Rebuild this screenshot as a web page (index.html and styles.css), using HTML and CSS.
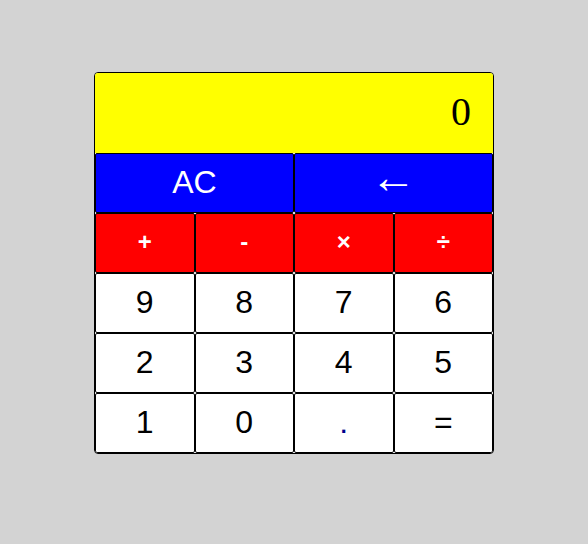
FILE: index.html
```html
<!DOCTYPE html>
<html>
<head>
<meta charset="utf-8">
<link rel="stylesheet" href="styles.css">
</head>
<body>
<div class="calc">
  <div class="display">0</div>
  <div class="keys">
    <button class="key wide blue">AC</button>
    <button class="key wide blue arrow">←</button>
    <button class="key red">+</button>
    <button class="key red">-</button>
    <button class="key red">×</button>
    <button class="key red">÷</button>
    <button class="key">9</button>
    <button class="key">8</button>
    <button class="key">7</button>
    <button class="key">6</button>
    <button class="key">2</button>
    <button class="key">3</button>
    <button class="key">4</button>
    <button class="key">5</button>
    <button class="key">1</button>
    <button class="key">0</button>
    <button class="key dot">.</button>
    <button class="key">=</button>
  </div>
</div>
</body>
</html>
```
FILE: styles.css
```css
html, body {
  background: #d3d3d3;
}
body {
  margin: 8px;
}
.calc {
  box-sizing: border-box;
  width: 400px;
  margin: 64px auto 0;
  border: 1px solid #000;
  border-radius: 4px;
  overflow: hidden;
  background: #fff;
}
.display {
  height: 80px;
  background: #ff0;
  font-family: "Liberation Serif", serif;
  font-size: 40px;
  line-height: 78px;
  text-align: right;
  padding-right: 22px;
}
.keys {
  display: grid;
  grid-template-columns: repeat(4, 1fr);
  grid-auto-rows: 60px;
}
.key {
  box-sizing: border-box;
  margin: 0;
  padding: 0 0 2px;
  border: 1px solid #000;
  border-radius: 2px;
  background: #fff;
  color: #000;
  font-family: "Liberation Sans", Arial, sans-serif;
  font-size: 32px;
}
.wide {
  grid-column: span 2;
}
.blue {
  background: #00f;
  color: #fff;
}
.arrow {
  font-size: 46px;
  line-height: 1;
  padding-bottom: 14px;
}
.red {
  background: #f00;
  color: #fff;
  font-size: 24px;
  font-weight: bold;
}
.dot {
  color: #00008b;
}
```
